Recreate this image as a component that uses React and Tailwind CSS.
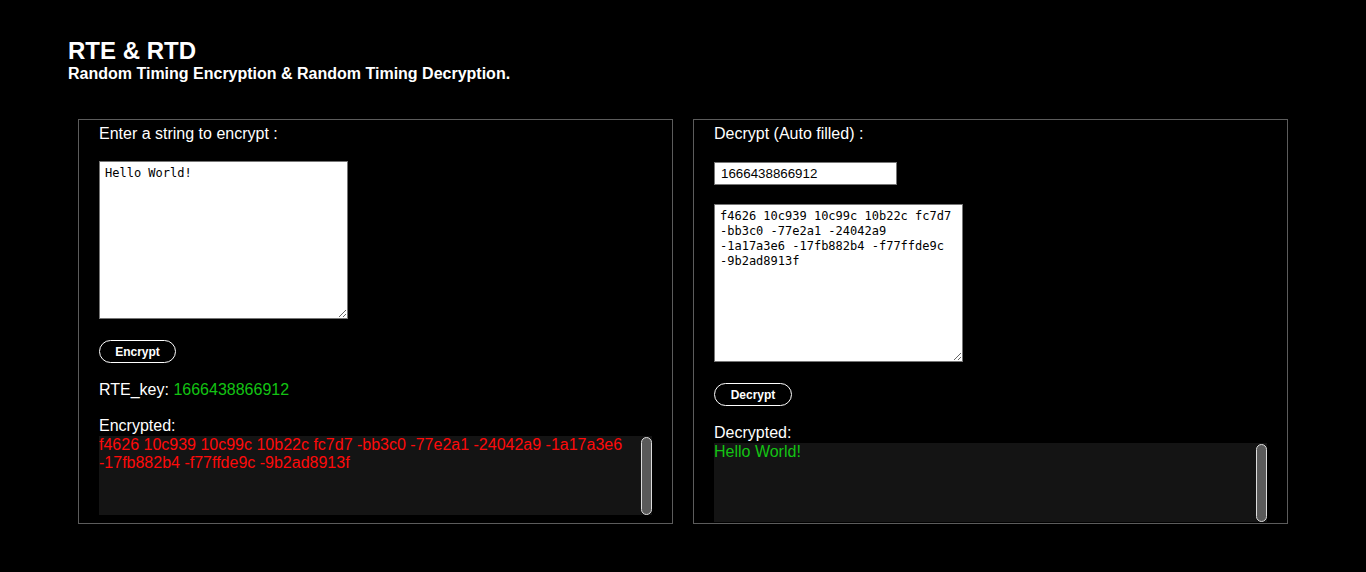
export default function App() {
  const cipher =
    "f4626 10c939 10c99c 10b22c fc7d7 -bb3c0 -77e2a1 -24042a9 -1a17a3e6 -17fb882b4 -f77ffde9c -9b2ad8913f";

  return (
    <div className="min-h-screen bg-black text-white font-['Liberation_Sans',Arial,sans-serif]">
      <div className="pl-[68px] pt-[39px]">
        <h1 className="text-[24px] font-bold leading-[24px]">RTE &amp; RTD</h1>
        <p className="text-[16px] font-bold leading-[18px] mt-[2px]">
          Random Timing Encryption &amp; Random Timing Decryption.
        </p>
      </div>

      <div className="flex gap-[20px] pl-[78px] mt-[36px]">
        {/* encrypt panel */}
        <div className="w-[595px] h-[405px] border border-[#5c5c5c] pt-[5px] px-[20px] flex flex-col">
          <label className="text-[16px] leading-[18px]">Enter a string to encrypt :</label>
          <textarea
            defaultValue="Hello World!"
            className="mt-[18px] w-[249px] h-[158px] bg-white text-black border border-[#767676] px-[5px] py-[4px] text-[12px] leading-[15px] font-['DejaVu_Sans_Mono',monospace] resize block"
          />
          <button className="mt-[21px] w-[77px] h-[23px] rounded-full border border-white text-[12px] font-bold leading-none">
            Encrypt
          </button>
          <p className="mt-[18px] text-[16px] leading-[18px]">
            RTE_key: <span className="text-[#13c313]">1666438866912</span>
          </p>
          <p className="mt-[18px] text-[16px] leading-[18px]">Encrypted:</p>
          <div className="relative mt-[1px] h-[79px] bg-[#141414] pr-[24px] text-[16px] leading-[18px] text-[#ff0a0a]">
            {cipher}
            <div className="absolute right-0 top-[1px] w-[11px] h-[78px] rounded-full bg-[#5a5a5a] border border-[#dcdcdc]" />
          </div>
        </div>

        {/* decrypt panel */}
        <div className="w-[595px] h-[405px] border border-[#5c5c5c] pt-[5px] px-[20px] flex flex-col">
          <label className="text-[16px] leading-[18px]">Decrypt (Auto filled) :</label>
          <input
            defaultValue="1666438866912"
            className="mt-[19px] w-[183px] h-[23px] bg-white text-black border border-[#767676] px-[6px] text-[13.33px] block"
          />
          <textarea
            defaultValue={cipher}
            className="mt-[19px] w-[249px] h-[158px] bg-white text-black border border-[#767676] px-[5px] py-[4px] text-[12px] leading-[15px] font-['DejaVu_Sans_Mono',monospace] resize block"
          />
          <button className="mt-[21px] w-[78px] h-[23px] rounded-full border border-white text-[12px] font-bold leading-none">
            Decrypt
          </button>
          <p className="mt-[18px] text-[16px] leading-[18px]">Decrypted:</p>
          <div className="relative mt-[1px] h-[79px] bg-[#141414] pr-[24px] text-[16px] leading-[18px] text-[#13c313]">
            Hello World!
            <div className="absolute right-0 top-[1px] w-[11px] h-[78px] rounded-full bg-[#5a5a5a] border border-[#dcdcdc]" />
          </div>
        </div>
      </div>
    </div>
  );
}
